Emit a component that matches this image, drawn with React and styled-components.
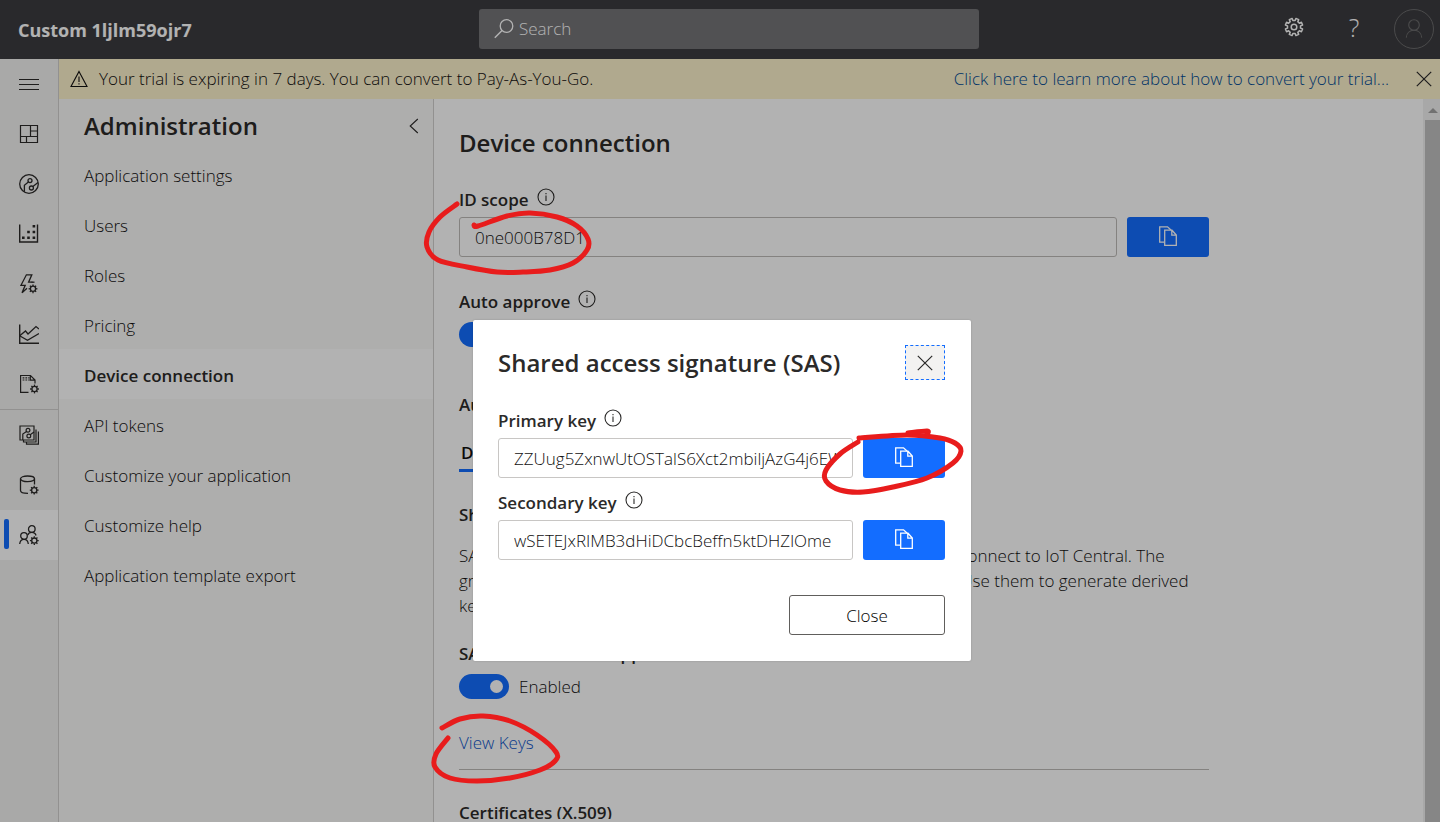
import React, { useState } from "react";
import styled, { createGlobalStyle, css } from "styled-components";

const GlobalStyle = createGlobalStyle`
  *, *::before, *::after { box-sizing: border-box; }
  html, body { margin: 0; padding: 0; }
  body, button, input {
    font-family: "Open Sans", "Noto Sans", "Liberation Sans", sans-serif;
    font-size: 17px;
    font-weight: 300;
    line-height: 26px;
    color: #111010;
  }
  button { border: 0; padding: 0; background: none; cursor: pointer; }
  h1, h2, h3, p { margin: 0; }
  a { color: #0d55c8; text-decoration: none; }
`;

/* ---------- drawing helpers ---------- */

const gearPath = (cx, cy, outer, inner, teeth) => {
  const step = (Math.PI * 2) / teeth;
  const point = (r, a) => `${(cx + r * Math.cos(a)).toFixed(2)},${(cy + r * Math.sin(a)).toFixed(2)}`;
  let d = "";
  for (let i = 0; i < teeth; i += 1) {
    const a = i * step + step / 2;
    d += `${i ? "L" : "M"}${point(inner, a - step * 0.28)} L${point(outer, a - step * 0.22)} L${point(outer, a + step * 0.22)} L${point(inner, a + step * 0.28)} `;
  }
  return `${d}Z`;
};

const smoothPath = (pts) => {
  let d = `M${pts[0][0]},${pts[0][1]}`;
  for (let i = 0; i < pts.length - 1; i += 1) {
    const p0 = pts[i - 1] || pts[i];
    const p1 = pts[i];
    const p2 = pts[i + 1];
    const p3 = pts[i + 2] || p2;
    d += ` C${p1[0] + (p2[0] - p0[0]) / 6},${p1[1] + (p2[1] - p0[1]) / 6} ${p2[0] - (p3[0] - p1[0]) / 6},${p2[1] - (p3[1] - p1[1]) / 6} ${p2[0]},${p2[1]}`;
  }
  return d;
};

const Svg = ({ size = 20, width, height, children, ...rest }) => (
  <svg
    width={width || size}
    height={height || size}
    viewBox={`0 0 ${width || size} ${height || size}`}
    fill="none"
    stroke="currentColor"
    strokeWidth="1.2"
    aria-hidden="true"
    {...rest}
  >
    {children}
  </svg>
);

const SmallGear = ({ x = 15.5, y = 15.5 }) => (
  <>
    <circle cx={x} cy={y} r="2.6" strokeWidth="1.3" />
    {[0, 45, 90, 135, 180, 225, 270, 315].map((a) => (
      <path key={a} d={`M${x},${y - 2.8}V${y - 4.4}`} transform={`rotate(${a} ${x} ${y})`} strokeWidth="1.3" />
    ))}
  </>
);

const MenuIcon = () => (
  <Svg><path d="M0,5.5H20M0,10.5H20M0,15.5H20" strokeWidth="1" /></Svg>
);
const DashboardIcon = () => (
  <Svg><path d="M1.5,1.5H18.5V18.5H1.5ZM1.5,12.5H18.5M11.5,1.5V12.5M11.5,7H18.5M7.5,12.5V18.5" /></Svg>
);
const DevicesIcon = () => (
  <Svg>
    <circle cx="10" cy="10" r="9.3" strokeWidth="1.3" />
    <circle cx="11" cy="6.6" r="2" strokeWidth="1.3" />
    <circle cx="12.4" cy="14" r="2" strokeWidth="1.3" />
    <path d="M9.4,8L5.4,11.2V17.8M13.9,12.5L19,8.6" strokeWidth="1.3" />
  </Svg>
);
const MatrixIcon = () => (
  <Svg>
    <path d="M0.7,0.5V18H18.5V0.5" strokeWidth="1.4" />
    <path d="M3,13.7h2.6M8.2,13.7h2.6M13.6,13.7h2.6M8.2,8h2.6M13.6,8h2.6M13.6,2.2h2.6" strokeWidth="2.6" />
  </Svg>
);
const RulesIcon = () => (
  <Svg><path d="M13.5,8.2H9.6L12.8,0.8H7.4L2,11.3H6.2L3,18.8L8,14.2" strokeWidth="1.3" /><path d="M12.5,8.2H15.5" strokeWidth="1.3" /><SmallGear x={14} y={14.8} /></Svg>
);
const AnalyticsIcon = () => (
  <Svg><path d="M0.7,0.5V19.3H20" strokeWidth="1.4" /><path d="M1,11.6L6.5,7L9,10L17,2.5L20,5M1,12L8.5,16.2L20,9.5" strokeWidth="1.3" /></Svg>
);
const JobsIcon = () => (
  <Svg><path d="M9.5,18.3H1.6V1.5H11.5L16,6V9.6M11.3,1.5V6.2H16" /><path d="M3.6,3.8h7M3.6,6h7" strokeDasharray="1.8 1" /><SmallGear x={15.5} y={15} /></Svg>
);
const TemplatesIcon = () => (
  <Svg>
    <path d="M1,1H15V15H1ZM4.5,15V17H17V4.5M7.5,17.5V19.2H19.4V6.5" />
    <circle cx="9" cy="5.2" r="1.9" />
    <circle cx="9.8" cy="11" r="1.9" />
    <path d="M7.5,6.5L3.8,9V15M11.2,9.7L15,7" />
  </Svg>
);
const ExportIcon = () => (
  <Svg>
    <ellipse cx="8.5" cy="3.8" rx="7" ry="2.8" strokeWidth="1.3" />
    <path d="M1.5,3.8V15.5C1.5,17.2 4.5,18.4 9,18.4M15.5,3.8V9.5" strokeWidth="1.3" />
    <SmallGear x={15.2} y={15.2} />
  </Svg>
);
const AdminIcon = () => (
  <Svg>
    <circle cx="12.8" cy="4" r="3.3" strokeWidth="1.3" />
    <circle cx="5" cy="11" r="3.3" strokeWidth="1.3" />
    <path d="M0.7,19C1,16 2.6,14.3 5,14.3C7.4,14.3 9,16 9.3,19M8.8,10C9.3,8.3 10.8,7.3 12.8,7.3C15,7.3 16.6,8.6 17,10.5" strokeWidth="1.3" />
    <SmallGear x={15.3} y={15.6} />
  </Svg>
);
const InfoIcon = () => (
  <Svg size={18}><circle cx="9" cy="9" r="8" strokeWidth="1.1" /><path d="M9,7.6V13M9,4.9V6.2" strokeWidth="1.1" /></Svg>
);
const CopyIcon = () => (
  <Svg size={20}>
    <path d="M6,16.2H1.7V0.8H9.5L13,4" strokeWidth="1.3" />
    <path d="M6.7,4.2H14L18.3,9V19.3H6.7ZM13.8,4.4V9.2H18.2" strokeWidth="1.3" />
  </Svg>
);
const CrossIcon = () => (
  <Svg size={16}><path d="M0.8,0.8L15.2,15.2M15.2,0.8L0.8,15.2" /></Svg>
);
const SearchIcon = () => (
  <Svg size={20}><circle cx="12.5" cy="7" r="6.3" strokeWidth="1.3" /><path d="M8,11.5L0.8,18.8" strokeWidth="1.5" /></Svg>
);
const SettingsIcon = () => (
  <Svg size={20}><path d={gearPath(10, 10, 8.8, 6.6, 8)} strokeWidth="1.5" strokeLinejoin="round" /><circle cx="10" cy="10" r="2.8" strokeWidth="1.5" /></Svg>
);
const PersonIcon = () => (
  <Svg size={20}><circle cx="10" cy="6" r="5.3" strokeWidth="1.1" /><path d="M2.3,18.6C2.6,14.2 5.6,11.3 10,11.3C14.4,11.3 17.4,14.2 17.7,18.6" strokeWidth="1.1" /></Svg>
);
const WarningIcon = () => (
  <Svg width={18} height={18}><path d="M9,1.5L17,16.5H1ZM9,6.5V12M9,13.2V14.6" strokeWidth="1.1" /></Svg>
);
const ChevronIcon = () => (
  <Svg width={10} height={16}><path d="M8.8,1L1.2,8L8.8,15" strokeWidth="1.1" /></Svg>
);

/* ---------- shell ---------- */

const Shell = styled.div`
  position: relative;
  display: flex;
  flex-direction: column;
  height: 100vh;
  overflow: hidden;
  background: #fff;
`;

const Header = styled.header`
  flex: none;
  display: grid;
  grid-template-columns: 1fr 500px 1fr;
  align-items: center;
  height: 59px;
  padding: 0 0 2px 18px;
  background: #3c3c3f;
  color: #fff;
`;

const AppName = styled.h1`
  padding-top: 2px;
  font-size: 18px;
  font-weight: 700;
  line-height: 28px;
`;

const SearchBox = styled.label`
  display: flex;
  align-items: center;
  gap: 5px;
  height: 40px;
  padding: 0 15px;
  border-radius: 3px;
  background: #747477;
`;

const SearchInput = styled.input`
  flex: 1;
  min-width: 0;
  padding: 0;
  border: 0;
  outline: 0;
  background: none;
  color: #fff;
  &::placeholder { color: #fff; opacity: 1; }
`;

const HeaderActions = styled.div`
  display: flex;
  justify-content: flex-end;
  align-items: center;
  gap: 20px;
  padding-right: 6px;
`;

const HeaderButton = styled.button`
  display: flex;
  align-items: center;
  justify-content: center;
  width: 40px;
  height: 40px;
  padding-bottom: 4px;
  color: #fff;
  font-size: 25px;
  ${(p) => p.$avatar && css`
    padding: 0;
    border: 1px solid #6b6b6d;
    border-radius: 50%;
    color: #6b6b6d;
  `}
`;

const Body = styled.div`
  flex: 1;
  display: flex;
  min-height: 0;
`;

const Rail = styled.nav`
  flex: none;
  display: flex;
  flex-direction: column;
  width: 59px;
  border-right: 1px solid #d2d0ce;
  background: #f3f2f1;
`;

const RailButton = styled.button`
  position: relative;
  flex: none;
  display: flex;
  align-items: center;
  justify-content: center;
  height: 50px;
  color: #2b2a29;
  ${(p) => p.$divided && css`
    height: 51px;
    border-top: 1px solid #d2d0ce;
  `}
  ${(p) => p.$active && css`
    background: #fff;
    &::before {
      content: "";
      position: absolute;
      left: 4px;
      top: 9px;
      width: 5px;
      height: 30px;
      border-radius: 2px;
      background: #136dff;
    }
  `}
`;

const Workspace = styled.div`
  flex: 1;
  display: flex;
  flex-direction: column;
  min-width: 0;
`;

const Banner = styled.div`
  flex: none;
  display: flex;
  align-items: center;
  gap: 11px;
  height: 40px;
  padding: 0 8px 0 11px;
  background: #fdf2cc;
`;

const BannerLink = styled.a`
  margin-left: auto;
  margin-right: 16px;
  color: #004a94;
`;

const IconButton = styled.button`
  display: flex;
  align-items: center;
  justify-content: center;
  color: #2b2a29;
`;

const Columns = styled.div`
  flex: 1;
  display: flex;
  min-height: 0;
`;

const SideNav = styled.nav`
  flex: none;
  width: 375px;
  border-right: 1px solid #d2d0ce;
  background: #faf9f8;
`;

const SideHeading = styled.div`
  display: flex;
  align-items: center;
  justify-content: space-between;
  height: 50px;
  padding: 3px 14px 0 25px;
`;

const Title = styled.h2`
  font-size: 24px;
  font-weight: 600;
  line-height: 30px;
  color: #2b2a29;
`;

const SideLink = styled.a`
  display: flex;
  align-items: center;
  height: 50px;
  padding: 4px 25px 0;
  color: #111010;
  ${(p) => p.$active && css`
    background: #fff;
    color: #2b2a29;
    font-weight: 600;
  `}
`;

const Main = styled.main`
  flex: 1;
  min-width: 0;
  margin-bottom: 3px;
  padding: 29px 25px 0;
  overflow: hidden;
`;

const Content = styled.div`
  max-width: 750px;
`;

const Scrollbar = styled.div`
  flex: none;
  display: flex;
  flex-direction: column;
  align-items: center;
  width: 17px;
  padding: 9px 0 0 2px;
  background: #f1f1f1;
`;

const ScrollArrow = styled.div`
  flex: none;
  border: 5px solid transparent;
  border-top: 0;
  border-bottom-color: #a3a3a3;
`;

const ScrollThumb = styled.div`
  flex: 1;
  width: 100%;
  margin-top: 7px;
  background: #c1c1c1;
`;

/* ---------- form parts ---------- */

const Field = styled.div`
  margin-top: ${(p) => p.$top}px;
`;

const LabelRow = styled.div`
  display: flex;
  align-items: center;
  gap: 8px;
  padding-bottom: ${(p) => p.$gap || 4}px;
  color: #2b2a29;
  font-weight: 600;
  svg { margin-bottom: 6px; }
`;

const CopyRow = styled.div`
  display: flex;
  gap: 10px;
`;

const TextInput = styled.input`
  flex: 1;
  min-width: 0;
  height: 40px;
  padding: 0 15px;
  border: 1px solid ${(p) => p.$edge || "#c8c6c4"};
  border-radius: 3px;
  background: #fff;
`;

const CopyButton = styled.button`
  flex: none;
  display: flex;
  align-items: center;
  justify-content: center;
  width: 82px;
  height: 40px;
  padding-bottom: 2px;
  border-radius: 3px;
  background: #136dff;
  color: #fff;
`;

const ToggleLabel = styled.label`
  display: flex;
  align-items: center;
  gap: 10px;
  height: 25px;
`;

const Toggle = styled.input`
  appearance: none;
  flex: none;
  display: flex;
  align-items: center;
  width: 50px;
  height: 25px;
  margin: 0;
  padding: 0 6px;
  border-radius: 13px;
  background: #8a8886;
  &::before {
    content: "";
    width: 13px;
    height: 13px;
    border-radius: 50%;
    background: #fff;
  }
  &:checked {
    justify-content: flex-end;
    background: #136dff;
  }
`;

const Subheading = styled.h3`
  margin-top: ${(p) => p.$top}px;
  color: #2b2a29;
  font-size: 17px;
  font-weight: 600;
  line-height: 26px;
`;

const TabList = styled.div`
  display: flex;
  gap: 20px;
  margin-top: 22px;
`;

const Tab = styled.button`
  padding: 0 2px 3px;
  border-bottom: 3px solid ${(p) => (p.$active ? "#136dff" : "transparent")};
  font-weight: ${(p) => (p.$active ? 600 : 300)};
`;

const Paragraph = styled.p`
  margin-top: 15px;
  line-height: 25px;
`;

const LinkLine = styled.div`
  margin-top: 31px;
  padding-bottom: 13px;
  border-bottom: 1px solid #bebbb8;
`;

/* ---------- dialog ---------- */

const Overlay = styled.div`
  position: absolute;
  inset: 0;
  display: flex;
  align-items: flex-start;
  justify-content: center;
  padding: 320px 0 0 4px;
  background: rgba(0, 0, 0, 0.3);
`;

const Dialog = styled.div`
  width: 498px;
  padding: 25px 26px 26px 25px;
  border-radius: 2px;
  background: #fff;
  box-shadow: 0 0 2px rgba(0, 0, 0, 0.2);
`;

const DialogHeader = styled.div`
  display: flex;
  align-items: center;
  justify-content: space-between;
  margin-bottom: 28px;
`;

const DialogClose = styled(IconButton)`
  width: 40px;
  height: 35px;
  border: 1px dashed #136dff;
  background: #f3f2f1;
`;

const DialogFooter = styled.div`
  display: flex;
  justify-content: flex-end;
  margin-top: 35px;
`;

const OutlineButton = styled.button`
  width: 156px;
  height: 40px;
  padding-top: 2px;
  border: 1px solid #605e5c;
  border-radius: 3px;
  background: #fff;
  color: #000;
`;

const InkLayer = styled.svg`
  position: absolute;
  inset: 0;
  width: 100%;
  height: 100%;
  pointer-events: none;
`;

/* ---------- data ---------- */

const railItems = [
  { name: "Menu", Icon: MenuIcon },
  { name: "Dashboard", Icon: DashboardIcon },
  { name: "Devices", Icon: DevicesIcon },
  { name: "Device groups", Icon: MatrixIcon },
  { name: "Rules", Icon: RulesIcon },
  { name: "Analytics", Icon: AnalyticsIcon },
  { name: "Jobs", Icon: JobsIcon },
  { name: "Device templates", Icon: TemplatesIcon, divided: true },
  { name: "Data export", Icon: ExportIcon },
  { name: "Administration", Icon: AdminIcon, active: true },
];

const sideItems = [
  "Application settings",
  "Users",
  "Roles",
  "Pricing",
  "Device connection",
  "API tokens",
  "Customize your application",
  "Customize help",
  "Application template export",
];

const inkStrokes = [
  [[457, 204], [440, 217], [429, 232], [427, 247], [438, 260], [467, 267], [497, 272], [523, 272], [550, 270], [573, 263], [587, 250], [588, 239], [577, 226], [557, 217], [530, 213], [507, 216], [478, 226], [474, 225]],
  [[858, 442], [840, 454], [826, 470], [826, 481], [840, 490], [863, 492], [893, 487], [927, 478], [953, 463], [961, 451], [955, 443], [940, 438], [907, 435], [859, 438]],
  [[908, 433], [927, 431], [927, 434]],
  [[442, 728], [460, 719], [483, 716], [510, 721], [537, 735], [556, 752], [555, 761], [540, 770], [510, 778], [477, 781], [450, 778], [435, 767], [436, 754], [448, 738]],
];

const CopyField = ({ id, label, value, top, edge }) => (
  <Field $top={top}>
    <LabelRow>
      <label htmlFor={id}>{label}</label>
      <InfoIcon />
    </LabelRow>
    <CopyRow>
      <TextInput id={id} defaultValue={value} readOnly $edge={edge} />
      <CopyButton type="button" aria-label={`Copy ${label}`}><CopyIcon /></CopyButton>
    </CopyRow>
  </Field>
);

export default function App() {
  const [open, setOpen] = useState(true);
  return (
    <Shell>
      <GlobalStyle />
      <Header>
        <AppName>Custom 1ljlm59ojr7</AppName>
        <SearchBox>
          <SearchIcon />
          <SearchInput type="text" placeholder="Search" aria-label="Search" />
        </SearchBox>
        <HeaderActions>
          <HeaderButton type="button" aria-label="Settings"><SettingsIcon /></HeaderButton>
          <HeaderButton type="button" aria-label="Help">?</HeaderButton>
          <HeaderButton type="button" aria-label="Account" $avatar><PersonIcon /></HeaderButton>
        </HeaderActions>
      </Header>

      <Body>
        <Rail aria-label="Application">
          {railItems.map(({ name, Icon, divided, active }) => (
            <RailButton key={name} type="button" aria-label={name} $divided={divided} $active={active}>
              <Icon />
            </RailButton>
          ))}
        </Rail>

        <Workspace>
          <Banner>
            <WarningIcon />
            <span>Your trial is expiring in 7 days. You can convert to Pay-As-You-Go.</span>
            <BannerLink href="#convert">Click here to learn more about how to convert your trial...</BannerLink>
            <IconButton type="button" aria-label="Dismiss"><CrossIcon /></IconButton>
          </Banner>

          <Columns>
            <SideNav aria-label="Administration">
              <SideHeading>
                <Title>Administration</Title>
                <IconButton type="button" aria-label="Collapse"><ChevronIcon /></IconButton>
              </SideHeading>
              {sideItems.map((item) => (
                <SideLink key={item} href="#section" $active={item === "Device connection"}>{item}</SideLink>
              ))}
            </SideNav>

            <Main>
              <Content>
                <Title>Device connection</Title>
                <CopyField id="scope" label="ID scope" value="0ne000B78D1" top={29} edge="#bebbb8" />
                <Field $top={32}>
                  <LabelRow $gap={7}>
                    <label htmlFor="approve">Auto approve</label>
                    <InfoIcon />
                  </LabelRow>
                  <ToggleLabel>
                    <Toggle id="approve" type="checkbox" defaultChecked />
                    Enabled
                  </ToggleLabel>
                </Field>
                <Subheading $top={45}>Authentication methods</Subheading>
                <TabList>
                  <Tab type="button" $active>Devices</Tab>
                </TabList>
                <Subheading $top={30}>Shared access signature (SAS)</Subheading>
                <Paragraph>
                  SAS tokens are an authentication method which lets your devices connect to IoT Central. The
                  group shares both a primary and a secondary key for SAS tokens. Use them to generate derived
                  keys for your devices.
                </Paragraph>
                <Field $top={23}>
                  <LabelRow $gap={7}><label htmlFor="sas">SAS modules auto approve</label></LabelRow>
                  <ToggleLabel>
                    <Toggle id="sas" type="checkbox" defaultChecked />
                    Enabled
                  </ToggleLabel>
                </Field>
                <LinkLine><a href="#keys">View Keys</a></LinkLine>
                <Subheading $top={30}>Certificates (X.509)</Subheading>
              </Content>
            </Main>
            <Scrollbar aria-hidden="true">
              <ScrollArrow />
              <ScrollThumb />
            </Scrollbar>
          </Columns>
        </Workspace>
      </Body>

      {open && (
        <Overlay>
          <Dialog role="dialog" aria-modal="true" aria-labelledby="sas-title">
            <DialogHeader>
              <Title id="sas-title">Shared access signature (SAS)</Title>
              <DialogClose type="button" aria-label="Close dialog" onClick={() => setOpen(false)}><CrossIcon /></DialogClose>
            </DialogHeader>
            <CopyField id="primary" label="Primary key" value="ZZUug5ZxnwUtOSTalS6Xct2mbiljAzG4j6EW" top={0} />
            <CopyField id="secondary" label="Secondary key" value="wSETEJxRIMB3dHiDCbcBeffn5ktDHZlOme" top={12} />
            <DialogFooter>
              <OutlineButton type="button" onClick={() => setOpen(false)}>Close</OutlineButton>
            </DialogFooter>
          </Dialog>
        </Overlay>
      )}

      <InkLayer aria-hidden="true" fill="none" stroke="#e81c1c" strokeWidth="5" strokeLinecap="round" strokeLinejoin="round">
        {inkStrokes.map((pts) => <path key={pts[0].join()} d={smoothPath(pts)} />)}
      </InkLayer>
    </Shell>
  );
}
